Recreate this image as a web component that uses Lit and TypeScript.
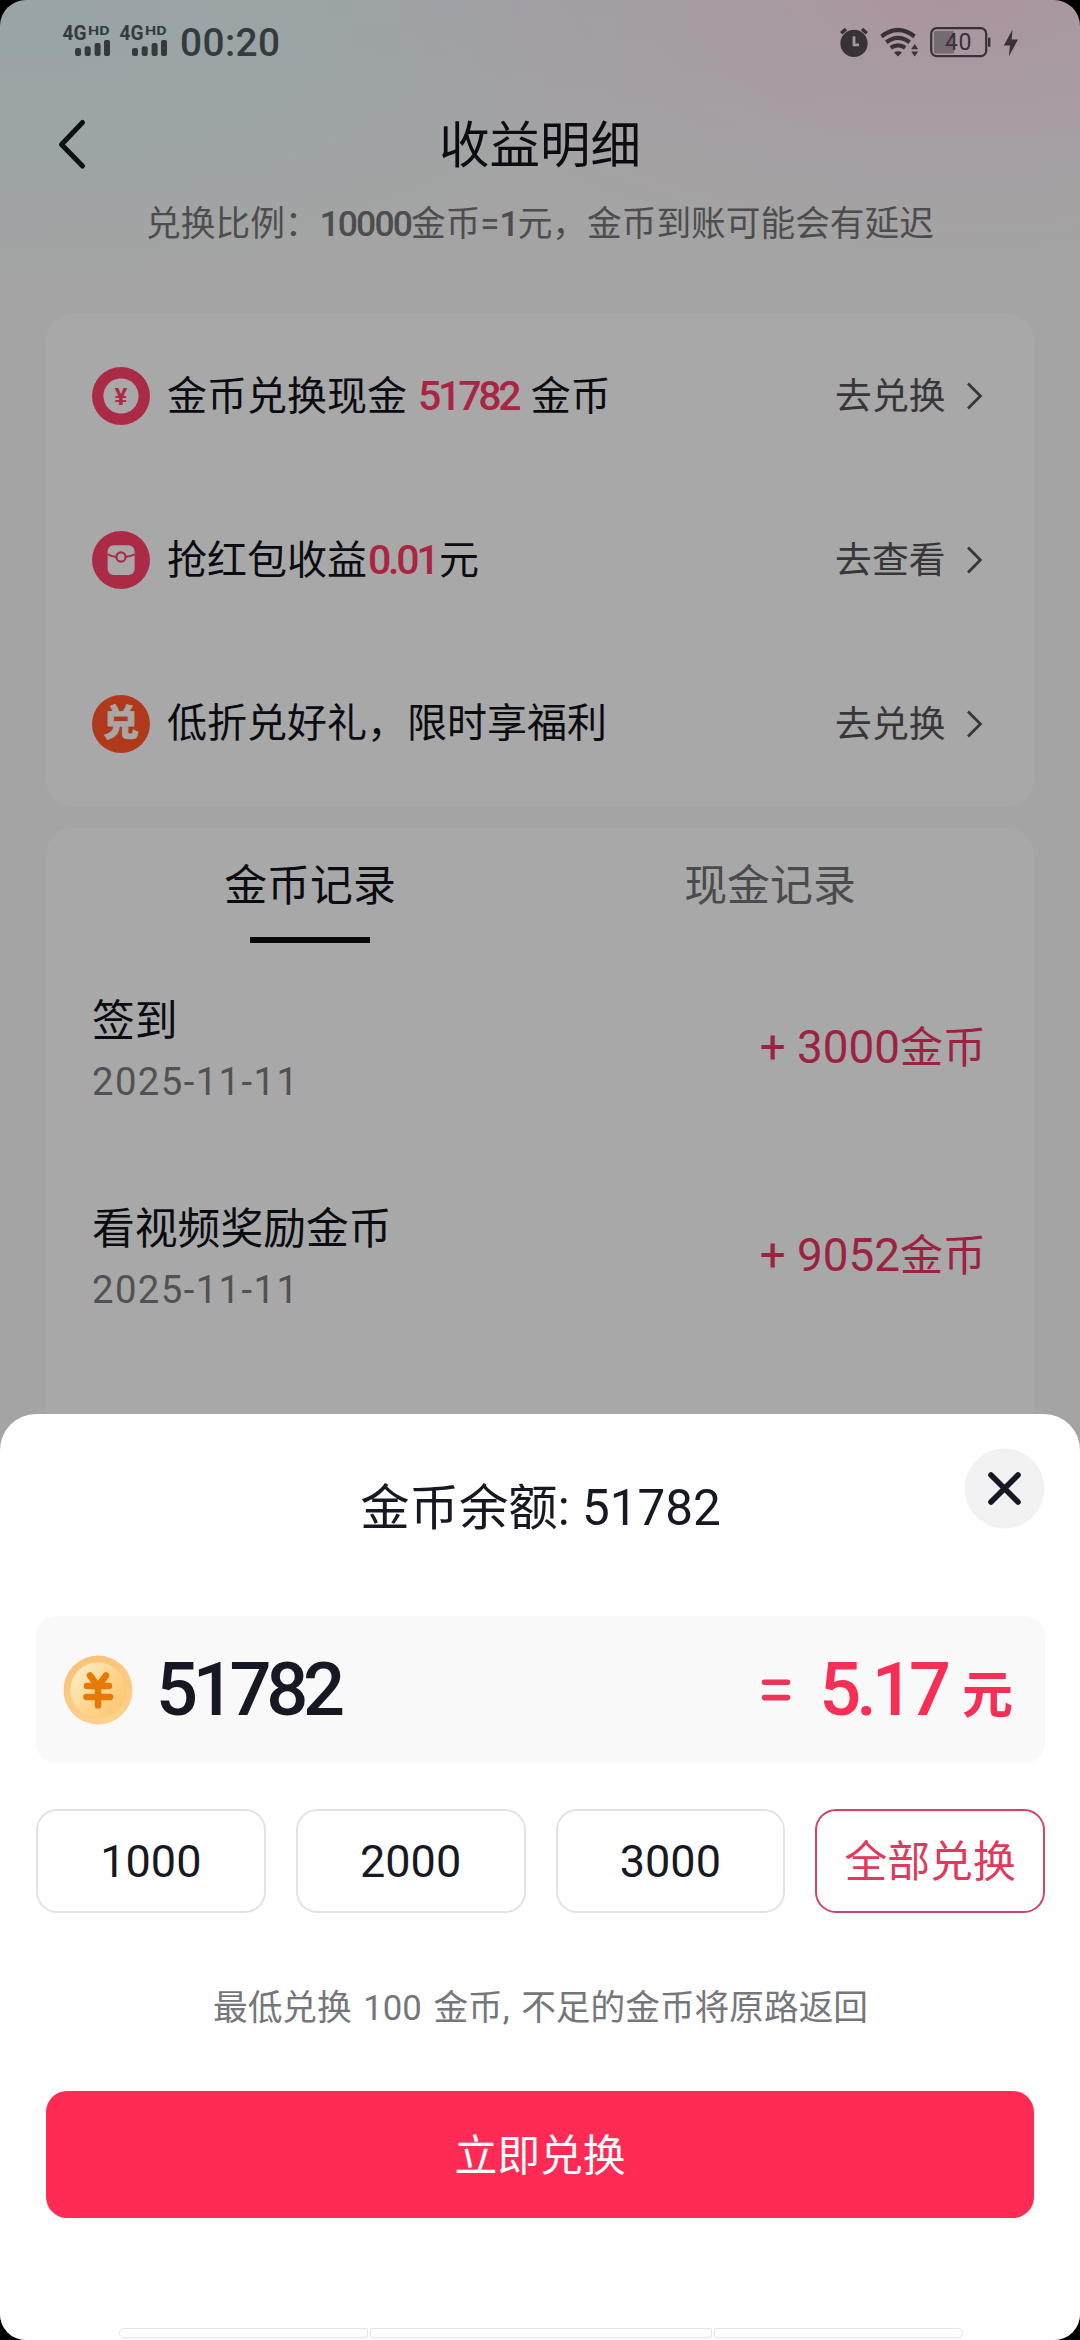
import { LitElement, html, css, svg } from "lit";
import { customElement, property } from "lit/decorators.js";

const fontStack = css`Roboto, "Noto Sans CJK SC", sans-serif`;

@customElement("status-bar")
export class StatusBar extends LitElement {
  static styles = css`
    :host {
      display: flex;
      align-items: center;
      justify-content: space-between;
      height: 84px;
      padding: 0 60px 0 62px;
      box-sizing: border-box;
      font-family: ${fontStack};
    }
    .left {
      display: flex;
      align-items: center;
      color: #333b3d;
    }
    svg {
      display: block;
      fill: currentColor;
      overflow: visible;
    }
    .net {
      font-size: 20.5px;
      font-weight: 700;
    }
    .hd {
      font-size: 13.5px;
      font-weight: 700;
    }
    .time {
      margin-left: 4px;
      padding-top: 2px;
      font-size: 38.8px;
      font-weight: 500;
      line-height: 82px;
      letter-spacing: 0.4px;
    }
    .right {
      display: flex;
      align-items: center;
      color: #393138;
    }
    .level {
      font-size: 23px;
    }
  `;

  private signal() {
    return svg`
      <svg width="57" height="52" viewBox="0 -10 57 52">
        <text class="net" x="0.5" y="14.2" textLength="24" lengthAdjust="spacingAndGlyphs">4G</text>
        <text class="hd" x="26" y="9.4" textLength="21.5" lengthAdjust="spacingAndGlyphs">HD</text>
        <rect x="13" y="22" width="6" height="8" rx="2" />
        <rect x="22.7" y="20.3" width="6" height="9.7" rx="2" />
        <rect x="32.6" y="17" width="6" height="13" rx="2" />
        <rect x="42" y="14" width="6" height="16" rx="2" />
      </svg>`;
  }

  render() {
    return html`
      <div class="left">
        ${this.signal()}${this.signal()}
        <span class="time">00:20</span>
      </div>
      <div class="right">
        <svg width="180" height="32" viewBox="0 0 180 32">
          <circle cx="14" cy="17.4" r="13.6" />
          <path d="M1.2 7.2 6 3M26.8 7.2 22 3" fill="none" stroke="currentColor" stroke-width="3.4" />
          <path d="M14 10.2V18.8H19" fill="none" stroke="#a698a2" stroke-width="2.8" />
          <g fill="none" stroke="currentColor" stroke-width="4.2">
            <path d="M41.5 10.5Q58 -2.5 74.5 10.5" />
            <path d="M46.3 16.2Q58 7.4 69.7 16.2" />
            <path d="M50.8 21.8Q58 16.8 65.2 21.8" />
          </g>
          <path d="M54 26.4Q58 24.2 62 26.4L58 30.6Z" />
          <path d="M71.2 23.2 74.7 18 78.2 23.2ZM71.2 25.6H78.2L74.7 30.6Z" />
          <rect x="94" y="5" width="20" height="22.4" rx="1.5" fill="#746a71" />
          <rect x="91.2" y="2.2" width="55" height="28" rx="5.5" fill="none" stroke="currentColor" stroke-width="2.2" />
          <rect x="148" y="11.5" width="2.4" height="9.4" rx="1" />
          <text class="level" x="105" y="24.4" textLength="26.5">40</text>
          <path d="M172.5 3.6 163.8 19.4H170L168.8 30.6 178 13.6H171.6Z" />
        </svg>
      </div>
    `;
  }
}

@customElement("entry-row")
export class EntryRow extends LitElement {
  @property() icon: "coin" | "packet" | "gift" = "coin";
  @property() action = "";

  static styles = css`
    :host {
      display: flex;
      align-items: center;
      height: 164px;
      padding: 0 50px 0 46px;
      box-sizing: border-box;
      font-family: ${fontStack};
    }
    .icon {
      display: block;
      width: 58px;
      height: 58px;
      margin-right: 17px;
    }
    .yen {
      font-size: 24px;
      font-weight: 700;
      fill: #ab2b47;
    }
    .dui {
      font-family: "Noto Sans CJK SC", sans-serif;
      font-size: 36px;
      font-weight: 900;
      fill: #aaa6a5;
      stroke: #aaa6a5;
      stroke-width: 0.8;
    }
    .label {
      flex: 1;
      font-size: 40px;
      line-height: 60px;
      color: #0b0c11;
      white-space: nowrap;
    }
    .action {
      padding-top: 2px;
      font-size: 36.8px;
      line-height: 60px;
      color: #37373a;
      margin-right: 18.5px;
    }
    .chev {
      display: block;
    }
  `;

  private glyph() {
    switch (this.icon) {
      case "coin":
        return svg`
          <circle cx="29" cy="29" r="29" fill="#ab2b47" />
          <circle cx="29" cy="29" r="17.6" fill="#a9a7a8" />
          <text class="yen" x="29" y="37.6" text-anchor="middle">¥</text>`;
      case "packet":
        return svg`
          <circle cx="29" cy="29" r="29" fill="#ab2b47" />
          <rect x="15.6" y="14.2" width="27" height="29.8" rx="6" fill="#a9a7a8" />
          <path d="M15.6 23.4Q20 25.6 24.6 26M42.6 23.4Q38 25.6 33.6 26" fill="none" stroke="#ab2b47" stroke-width="2" />
          <circle cx="29" cy="26" r="4.6" fill="#a9a7a8" stroke="#ab2b47" stroke-width="2.2" />`;
      default:
        return svg`
          <circle cx="29" cy="29" r="29" fill="#b0391b" />
          <text class="dui" x="29" y="41.4" text-anchor="middle">兑</text>`;
    }
  }

  render() {
    return html`
      <svg class="icon" viewBox="0 0 58 58">${this.glyph()}</svg>
      <span class="label"><slot></slot></span>
      <span class="action">${this.action}</span>
      <svg class="chev" width="20" height="30" viewBox="0 0 20 30">
        <path d="M4 2.4 16.4 15 4 27.6" fill="none" stroke="#37373a" stroke-width="2.8" />
      </svg>
    `;
  }
}

interface RecordItem {
  name: string;
  date: string;
  amount: string;
}

@customElement("app-root")
export class AppRoot extends LitElement {
  private records: RecordItem[] = [
    { name: "签到", date: "2025-11-11", amount: "+ 3000" },
    { name: "看视频奖励金币", date: "2025-11-11", amount: "+ 9052" },
  ];

  private presets = ["1000", "2000", "3000"];

  static styles = css`
    :host {
      display: block;
      width: 1080px;
      height: 2340px;
      background: #000;
      font-family: ${fontStack};
    }
    * {
      box-sizing: border-box;
    }
    .screen {
      position: relative;
      height: 2340px;
      overflow: hidden;
      border-radius: 26px;
      background:
        radial-gradient(ellipse 560px 260px at 88% 0, #ab94a0 0%, rgba(168, 155, 163, 0.7) 45%, rgba(164, 164, 164, 0) 100%),
        radial-gradient(ellipse 640px 260px at 2% 22px, #99a4a7 0%, rgba(155, 165, 165, 0.8) 45%, rgba(164, 164, 164, 0) 100%),
        linear-gradient(#a09fa7 0, #a4a4a4 150px);
    }
    .nav {
      display: grid;
      grid-template-columns: 120px 1fr 120px;
      align-items: center;
      height: 120px;
    }
    .back {
      display: block;
      margin-left: 54px;
    }
    .title {
      padding-top: 3px;
      text-align: center;
      font-size: 50.5px;
      line-height: 80px;
      color: #0c0c12;
    }
    .ratio {
      padding-top: 2px;
      text-align: center;
      font-size: 34.7px;
      line-height: 37px;
      color: #4d4d4f;
      white-space: nowrap;
    }
    .ratio b {
      font-weight: 500;
      font-size: 35.5px;
      letter-spacing: -1.9px;
    }
    .card {
      margin: 71px 46px 0;
      border-radius: 26px;
      background: #a8a8a8;
    }
    .records {
      height: 620px;
      margin-top: 22px;
    }
    .hot {
      color: #ab2443;
      font-weight: 500;
      font-size: 41px;
      letter-spacing: -3.2px;
      margin: 0 2.5px 0 1px;
    }
    .tabs {
      display: grid;
      grid-template-columns: 1fr 1fr;
      padding: 7px 34px 0;
    }
    .tab {
      display: flex;
      flex-direction: column;
      align-items: center;
      font-size: 42.9px;
      line-height: 102px;
      color: #4b4b4d;
    }
    .tab.on {
      color: #0b0c11;
    }
    .tab.on::after {
      content: "";
      width: 120px;
      height: 6px;
      background: #070808;
    }
    .record {
      display: flex;
      align-items: center;
      justify-content: space-between;
      height: 208px;
      padding: 0 48px 0 46px;
    }
    .info {
      padding-top: 7px;
    }
    .name {
      font-size: 42.8px;
      line-height: 62px;
      color: #0b0c11;
    }
    .date {
      font-size: 38.3px;
      line-height: 60px;
      letter-spacing: 1.4px;
      color: #515153;
    }
    .gain {
      padding-top: 2px;
      font-size: 43px;
      line-height: 60px;
      color: #9c2340;
    }
    .gain .num {
      font-size: 45.8px;
    }
    .sheet {
      position: absolute;
      left: 0;
      right: 0;
      bottom: 0;
      height: 926px;
      border-radius: 36px 36px 0 0;
      background: #fff;
      display: flex;
      flex-direction: column;
      padding: 54px 35px 2px 36px;
    }
    .balance {
      text-align: center;
      font-size: 49.4px;
      line-height: 80px;
      color: #161823;
    }
    .close {
      position: absolute;
      top: 34px;
      right: 35px;
      width: 81px;
      height: 81px;
    }
    .summary {
      display: flex;
      align-items: center;
      height: 147px;
      margin-top: 68px;
      padding: 0 32px 0 27px;
      border-radius: 20px;
      background: #f9f9f9;
    }
    .coin {
      display: block;
      width: 70px;
      height: 70px;
      margin-right: 23px;
    }
    .coins {
      flex: 1;
      font-size: 74px;
      font-weight: 500;
      line-height: 147px;
      letter-spacing: -5.3px;
      color: #161823;
    }
    .cash {
      display: flex;
      align-items: center;
      line-height: 147px;
      color: #f72f57;
    }
    .eq {
      margin-right: 28px;
    }
    .eq svg {
      display: block;
    }
    .sum {
      font-size: 74px;
      font-weight: 500;
      letter-spacing: -5px;
    }
    .unit {
      padding-top: 12px;
      font-size: 51px;
      font-weight: 700;
      margin-left: 16px;
    }
    .chips {
      display: grid;
      grid-template-columns: repeat(4, 1fr);
      gap: 30px;
      margin-top: 46px;
    }
    .chip {
      height: 104px;
      border: 2px solid #e3e3e4;
      border-radius: 21px;
      text-align: center;
      font-size: 45px;
      line-height: 102px;
      color: #161823;
    }
    .chip.all {
      border-color: #d44565;
      color: #e2385c;
      font-size: 42.8px;
    }
    .hint {
      margin-top: 75px;
      text-align: center;
      font-size: 34.7px;
      line-height: 40px;
      word-spacing: 3px;
      color: #75767c;
    }
    .submit {
      margin: 63px 11px 0 10px;
      padding-top: 2px;
      height: 127px;
      border-radius: 21px;
      background: #ff2b54;
      color: #fff;
      text-align: center;
      font-size: 42.8px;
      line-height: 126px;
    }
    .grip {
      display: grid;
      grid-template-columns: 249px 342px 249px;
      gap: 2px;
      margin: auto auto 0;
    }
    .grip i {
      height: 10px;
      border: 1px solid #e4e4e4;
      border-radius: 2px;
    }
    .grip i:first-child {
      border-radius: 5px 2px 2px 5px;
    }
    .grip i:last-child {
      border-radius: 2px 5px 5px 2px;
    }
  `;

  private coin() {
    return html`
      <svg class="coin" viewBox="0 0 70 70">
        <defs>
          <linearGradient id="rim" x1="0" y1="0" x2="0.3" y2="1">
            <stop offset="0" stop-color="#fdc076" />
            <stop offset="1" stop-color="#fdd08c" />
          </linearGradient>
          <linearGradient id="face" x1="0" y1="0" x2="1" y2="0.8">
            <stop offset="0" stop-color="#fff2d2" />
            <stop offset="0.6" stop-color="#fdd48c" />
            <stop offset="1" stop-color="#fcc672" />
          </linearGradient>
        </defs>
        <circle cx="35" cy="35" r="34.5" fill="url(#rim)" />
        <circle cx="35" cy="35" r="28" fill="url(#face)" stroke="#fbc977" stroke-width="0.8" />
        <path
          d="M27 20.5 32.5 28M43 20.5 37.5 28M24 31H46M23.5 42H47M35 31V50.5"
          fill="none"
          stroke="#e57b06"
          stroke-width="6.6"
          stroke-linecap="round"
          stroke-linejoin="round"
        />
      </svg>
    `;
  }

  render() {
    return html`
      <div class="screen">
        <status-bar></status-bar>
        <header class="nav">
          <svg class="back" width="36" height="54" viewBox="0 0 36 54">
            <path d="M28.5 5.5 7.5 27.5 28.5 49" fill="none" stroke="#0e1016" stroke-width="5" stroke-linecap="round" stroke-linejoin="round" />
          </svg>
          <div class="title">收益明细</div>
        </header>
        <div class="ratio">兑换比例：<b>10000</b>金币=<b>1</b>元，金币到账可能会有延迟</div>

        <section class="card">
          <entry-row icon="coin" action="去兑换">金币兑换现金 <span class="hot">51782</span> 金币</entry-row>
          <entry-row icon="packet" action="去查看">抢红包收益<span class="hot">0.01</span>元</entry-row>
          <entry-row icon="gift" action="去兑换">低折兑好礼，限时享福利</entry-row>
        </section>

        <section class="card records">
          <div class="tabs">
            <div class="tab on">金币记录</div>
            <div class="tab">现金记录</div>
          </div>
          ${this.records.map(
            (r) => html`
              <div class="record">
                <div class="info">
                  <div class="name">${r.name}</div>
                  <div class="date">${r.date}</div>
                </div>
                <div class="gain"><span class="num">${r.amount}</span>金币</div>
              </div>
            `
          )}
        </section>

        <section class="sheet">
          <div class="balance">金币余额: 51782</div>
          <svg class="close" viewBox="0 0 81 81">
            <circle cx="40.5" cy="40.5" r="40" fill="#f2f2f3" />
            <path d="M27 27 54 54M54 27 27 54" stroke="#161823" stroke-width="5.6" stroke-linecap="round" />
          </svg>
          <div class="summary">
            ${this.coin()}
            <span class="coins">51782</span>
            <div class="cash">
              <span class="eq">
                <svg width="30" height="22" viewBox="0 0 30 22">
                  <path d="M3.5 3.2H26.5M3.5 18.6H26.5" stroke="#ef3459" stroke-width="5.6" stroke-linecap="round" />
                </svg>
              </span>
              <span class="sum">5.17</span><span class="unit">元</span>
            </div>
          </div>
          <div class="chips">
            ${this.presets.map((p) => html`<div class="chip">${p}</div>`)}
            <div class="chip all">全部兑换</div>
          </div>
          <div class="hint">最低兑换 100 金币, 不足的金币将原路返回</div>
          <div class="submit">立即兑换</div>
          <div class="grip"><i></i><i></i><i></i></div>
        </section>
      </div>
    `;
  }
}
